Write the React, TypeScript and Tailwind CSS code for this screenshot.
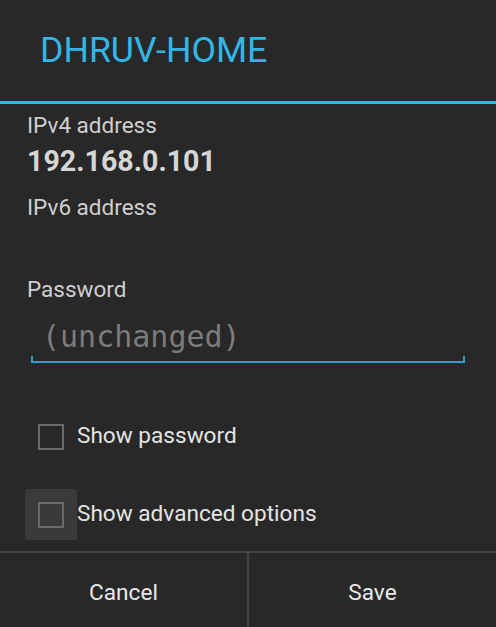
import React from "react";

const CheckRow = ({ label, pressed }: { label: string; pressed?: boolean }) => {
  return (
    <div className="flex items-center pl-[25px]">
      <div
        className={
          "flex h-[51px] w-[52px] items-center justify-center rounded-[3px] " +
          (pressed ? "bg-[#3a3a3a]" : "")
        }
      >
        <div className="h-[26px] w-[26px] border-2 border-[#6a6a6a]" />
      </div>
      <span className="text-[22.6px] leading-none text-[#e4e4e4]">{label}</span>
    </div>
  );
};

export default function App() {
  return (
    <div
      className="flex h-[627px] w-[496px] flex-col bg-[#282828]"
      style={{ fontFamily: "Roboto, 'Noto Sans', sans-serif" }}
    >
      {/* title */}
      <div className="flex h-[101px] items-center pl-[40px]">
        <h1 className="text-[35.7px] leading-none text-[#33b5e5]">DHRUV-HOME</h1>
      </div>
      <div className="h-[3px] bg-[#33b5e5]" />

      {/* details */}
      <div className="flex flex-col px-[27px]">
        <div className="mt-[9px] text-[22.5px] leading-[24px] text-[#cfcfcf]">IPv4 address</div>
        <div className="mt-[8px] text-[28.6px] font-bold leading-[32px] text-[#d6d6d6]">192.168.0.101</div>
        <div className="mt-[18px] text-[22.5px] leading-[24px] text-[#cfcfcf]">IPv6 address</div>
        <div className="mt-[58px] text-[22.5px] leading-[24px] text-[#cfcfcf]">Password</div>

        {/* password field */}
        <div className="relative mt-[12px] ml-[4px] mr-[4px] h-[50px]">
          <div
            className="pl-[11px] pt-[4px] text-[30px] leading-[40px] text-[#7c7c7c]"
            style={{ fontFamily: "'DejaVu Sans Mono', monospace" }}
          >
            (unchanged)
          </div>
          <div className="absolute bottom-0 left-0 right-0 h-[7px] border-x-2 border-b-2 border-[#2a9fd0]" />
        </div>
      </div>

      {/* checkboxes */}
      <div className="mt-[48px] flex flex-col gap-[27px]">
        <CheckRow label="Show password" />
        <CheckRow label="Show advanced options" pressed />
      </div>

      {/* buttons */}
      <div className="mt-auto flex h-[76px] border-t-2 border-[#434343]">
        <button className="flex flex-1 items-center justify-center pt-[5px] text-[22.6px] text-[#e8e8e8]">
          Cancel
        </button>
        <div className="w-[2px] bg-[#434343]" />
        <button className="flex flex-1 items-center justify-center pt-[5px] text-[22.6px] text-[#e8e8e8]">
          Save
        </button>
      </div>
    </div>
  );
}
